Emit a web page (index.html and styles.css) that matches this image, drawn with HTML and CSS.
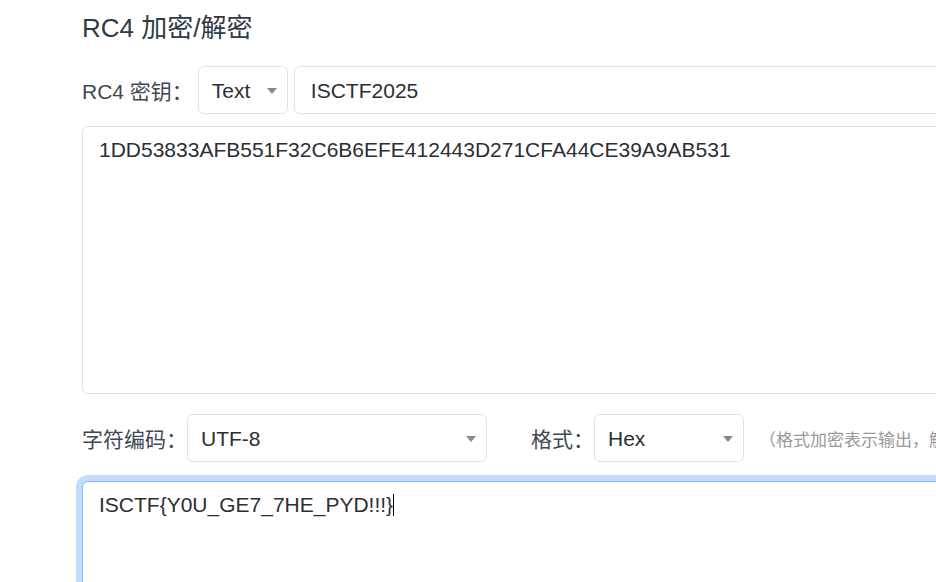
FILE: index.html
```html
<!DOCTYPE html>
<html lang="zh-CN">
<head>
<meta charset="utf-8">
<title>RC4 加密/解密</title>
<link rel="stylesheet" href="styles.css">
</head>
<body>
<main class="page">
  <h1 class="title">RC4 加密/解密</h1>
  <div class="row row-key">
    <label class="label label-key">RC4 密钥：</label>
    <div class="select select-type"><span class="select-text">Text</span><span class="arrow"></span></div>
    <div class="input">ISCTF2025</div>
  </div>
  <div class="area area-in">1DD53833AFB551F32C6B6EFE412443D271CFA44CE39A9AB531</div>
  <div class="row row-opts">
    <label class="label">字符编码：</label>
    <div class="select select-enc"><span class="select-text">UTF-8</span><span class="arrow"></span></div>
    <label class="label label-fmt">格式：</label>
    <div class="select select-fmt"><span class="select-text">Hex</span><span class="arrow"></span></div>
    <span class="hint">（格式加密表示输出，解密表示输入）</span>
  </div>
  <div class="area area-out focused">ISCTF{Y0U_GE7_7HE_PYD!!!}<span class="caret"></span></div>
</main>
</body>
</html>
```
FILE: styles.css
```css
html, body {
  margin: 0;
  padding: 0;
  overflow: hidden;
  background: #fff;
}
body {
  font-family: "Liberation Sans", Arial, "Noto Sans CJK SC", sans-serif;
  color: #2b2f33;
}
.page {
  width: 1120px;
  padding: 13px 0 0 82px;
}
.title {
  margin: 0 0 22px 0;
  font-size: 26px;
  font-weight: normal;
  line-height: 31px;
  color: #2f3a45;
}
.row {
  display: flex;
  align-items: center;
  height: 48px;
}
.label {
  font-size: 21px;
  color: #3f4852;
  white-space: nowrap;
}
.label-key {
  margin-right: 5px;
}
.select {
  box-sizing: border-box;
  height: 48px;
  border: 1px solid #dee2e6;
  border-radius: 6px;
  display: flex;
  align-items: center;
  padding: 1px 10px 0 13px;
  font-size: 21px;
  color: #2b2f33;
  flex: none;
}
.arrow {
  margin-left: auto;
  width: 0;
  height: 0;
  border-left: 5.5px solid transparent;
  border-right: 5.5px solid transparent;
  border-top: 6px solid #888;
}
.select-type { width: 90px; }
.select-enc { width: 300px; }
.select-fmt { width: 150px; }
.label-fmt { margin-left: 44px; }
.input {
  box-sizing: border-box;
  height: 48px;
  margin-left: 6px;
  flex: 1;
  border: 1px solid #dee2e6;
  border-radius: 6px;
  padding: 1px 16px 0;
  display: flex;
  align-items: center;
  font-size: 21px;
  color: #2b2f33;
}
.hint {
  margin-left: 15px;
  font-size: 17px;
  color: #9a9a9a;
  white-space: nowrap;
}
.area {
  box-sizing: border-box;
  border: 1px solid #dee2e6;
  border-radius: 6px;
  padding: 8px 16px;
  font-size: 21px;
  line-height: 29px;
  color: #2b2f33;
}
.area-in {
  margin: 12px 0 20px 0;
  height: 268px;
}
.area-out {
  margin-top: 19px;
  height: 200px;
}
.focused {
  border-color: #86b7fe;
  box-shadow: 0 0 0 6px #c2dbfe;
}
.caret {
  display: inline-block;
  width: 1px;
  height: 22px;
  background: #000;
  vertical-align: -4px;
}
```
